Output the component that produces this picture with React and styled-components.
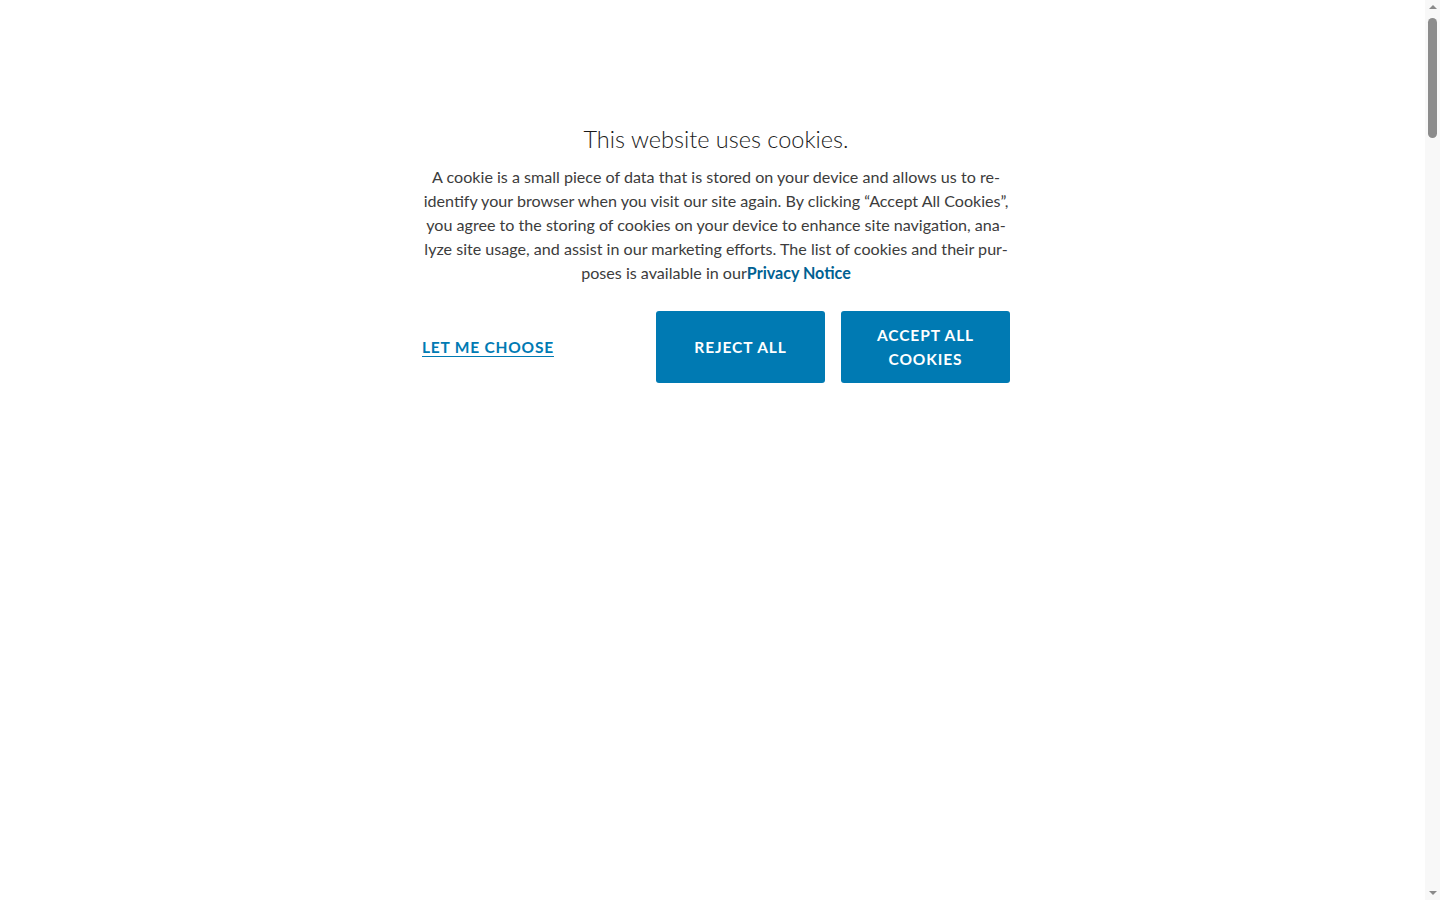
import React from "react";
import styled, { createGlobalStyle } from "styled-components";

const GlobalStyle = createGlobalStyle`
	html, body {
		margin: 0;
		padding: 0;
		background: #ffffff;
		overflow: hidden;
	}
	body {
		font-family: Lato, "Noto Sans", "Liberation Sans", sans-serif;
		color: #414141;
	}
`;

const Page = styled.div`
	min-height: 100vh;
	display: flex;
	justify-content: center;
	padding: 123px 8px 0 0;
	box-sizing: border-box;
`;

const Banner = styled.section`
	width: 588px;
	display: flex;
	flex-direction: column;
	align-items: center;
`;

const Title = styled.h2`
	margin: 0 0 10px;
	font-size: 23.5px;
	line-height: 32px;
	font-weight: 300;
	color: #1a1a1a;
	text-align: center;
`;

const Description = styled.p`
	margin: 0;
	font-size: 16.1px;
	line-height: 24px;
	font-weight: 400;
	color: #3c3c3c;
	text-align: center;
	white-space: nowrap;
`;

const NoticeLink = styled.a`
	color: #006192;
	font-weight: 700;
	text-decoration: none;
`;

const Actions = styled.div`
	width: 100%;
	margin-top: 26px;
	display: flex;
	align-items: center;
	gap: 16px;
`;

const ChooseLink = styled.a`
	flex: 1;
	color: #007ab3;
	font-size: 15.5px;
	font-weight: 700;
	letter-spacing: 0.8px;
	text-transform: uppercase;
	text-decoration: underline;
	text-underline-offset: 3px;
	cursor: pointer;
`;

const Button = styled.button`
	width: 169px;
	height: 72px;
	padding: 0 20px;
	border: none;
	border-radius: 3px;
	background: #007ab3;
	color: #ffffff;
	font-family: inherit;
	font-size: 15.5px;
	line-height: 24px;
	font-weight: 700;
	letter-spacing: 0.9px;
	text-transform: uppercase;
	cursor: pointer;
`;

const ScrollTrack = styled.div`
	position: fixed;
	top: 0;
	right: 0;
	width: 15px;
	height: 100vh;
	background: #f8f8f8;
	display: flex;
	flex-direction: column;
	align-items: center;
	justify-content: space-between;
`;

const Arrow = styled.div`
	width: 0;
	height: 0;
	margin: 5px 0;
	border-left: 4px solid transparent;
	border-right: 4px solid transparent;
	${({ $down }) =>
		$down ? "border-top: 4px solid #8a8a8a;" : "border-bottom: 4px solid #8a8a8a;"}
`;

const Thumb = styled.div`
	position: absolute;
	top: 18px;
	left: 3px;
	width: 9px;
	height: 120px;
	border-radius: 5px;
	background: #8c8c8c;
`;

export default function App() {
	return (
		<>
			<GlobalStyle />
			<Page>
				<Banner>
					<Title>This website uses cookies.</Title>
					<Description>
						A cookie is a small piece of data that is stored on your device and allows us to re-
						<br />
						identify your browser when you visit our site again. By clicking “Accept All Cookies”,
						<br />
						you agree to the storing of cookies on your device to enhance site navigation, ana-
						<br />
						lyze site usage, and assist in our marketing efforts. The list of cookies and their pur-
						<br />
						poses is available in our<NoticeLink href="#">Privacy Notice</NoticeLink>
					</Description>
					<Actions>
						<ChooseLink>Let me choose</ChooseLink>
						<Button>Reject all</Button>
						<Button>Accept all cookies</Button>
					</Actions>
				</Banner>
			</Page>
			<ScrollTrack>
				<Arrow />
				<Thumb />
				<Arrow $down />
			</ScrollTrack>
		</>
	);
}
